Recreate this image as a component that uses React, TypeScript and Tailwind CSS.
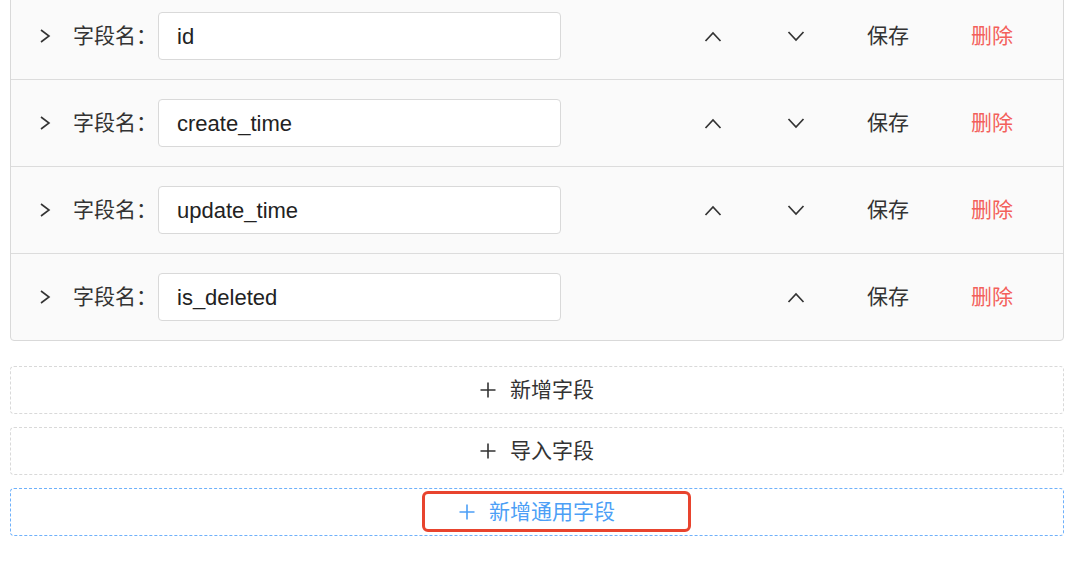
import React from 'react';

// Field list editor: rows of field names with move / save / delete actions

const FONT = '"Liberation Sans", "Noto Sans CJK SC", sans-serif';

const fields = ['id', 'create_time', 'update_time', 'is_deleted'];

const Caret = ({ dir }: { dir: 'up' | 'down' | 'right' }) => {
  if (dir === 'right') {
    return (
      <svg width="12" height="16" viewBox="0 0 12 16" fill="none">
        <polyline points="2,2 10,8 2,14" stroke="#333" strokeWidth="1.6" />
      </svg>
    );
  }
  return (
    <svg width="18" height="11" viewBox="0 0 18 11" fill="none">
      <polyline
        points={dir === 'up' ? '1.5,10 9,2 16.5,10' : '1.5,1 9,9 16.5,1'}
        stroke="#333"
        strokeWidth="1.7"
      />
    </svg>
  );
};

const Plus = ({ color }: { color: string }) => (
  <svg width="16" height="16" viewBox="0 0 16 16" fill="none">
    <path d="M8 0.5V15.5M0.5 8H15.5" stroke={color} strokeWidth="1.6" />
  </svg>
);

function FieldRow({ name, last }: { name: string; last: boolean }) {
  return (
    <div className={`flex items-center ${last ? 'h-[86px]' : 'h-[87px] border-b border-[#dcdcdc]'}`}>
      <div className="w-[62px] pl-[28px] flex items-center">
        <Caret dir="right" />
      </div>
      <span className="text-[21px] text-[#333] w-[85px] whitespace-nowrap">字段名：</span>
      <div className="w-[403px] h-[48px] bg-white border border-[#d9d9d9] rounded-[4px] flex items-center px-[18px] text-[22px] text-[#222]">
        {name}
      </div>
      <div className="ml-auto flex items-center pr-[19px]">
        <div className="w-[86px] flex justify-center">{!last && <Caret dir="up" />}</div>
        <div className="w-[80px] flex justify-center">
          <Caret dir={last ? 'up' : 'down'} />
        </div>
        <div className="w-[104px] text-center text-[21px] text-[#333]">保存</div>
        <div className="w-[104px] text-center text-[21px] text-[#f3605b]">删除</div>
      </div>
    </div>
  );
}

export default function App() {
  return (
    <div className="w-[1080px] h-[561px] bg-white overflow-hidden" style={{ fontFamily: FONT }}>
      <div className="ml-[10px] w-[1054px]">
        <div className="mt-[-8px] border border-[#d9d9d9] rounded-[4px] bg-[#fafafa]">
          {fields.map((f, i) => (
            <FieldRow key={f} name={f} last={i === fields.length - 1} />
          ))}
        </div>

        <div className="mt-[25px] flex flex-col gap-[13px]">
          <button className="h-[48px] border border-dashed border-[#d9d9d9] rounded-[4px] bg-white flex items-center justify-center gap-[14px] text-[21px] text-[#333]">
            <Plus color="#333" />
            <span>新增字段</span>
          </button>
          <button className="h-[48px] border border-dashed border-[#d9d9d9] rounded-[4px] bg-white flex items-center justify-center gap-[14px] text-[21px] text-[#333]">
            <Plus color="#333" />
            <span>导入字段</span>
          </button>
        </div>
        <button className="relative mt-[13px] w-full h-[48px] border border-dashed border-[#6fb1fb] rounded-[4px] bg-white flex items-center justify-center gap-[14px] text-[21px] text-[#4c9ff6]">
          <Plus color="#4c9ff6" />
          <span>新增通用字段</span>
          <div className="absolute left-[411px] top-[2px] w-[269px] h-[41px] border-[3px] border-[#e8442e] rounded-[6px]" />
        </button>
      </div>
    </div>
  );
}
